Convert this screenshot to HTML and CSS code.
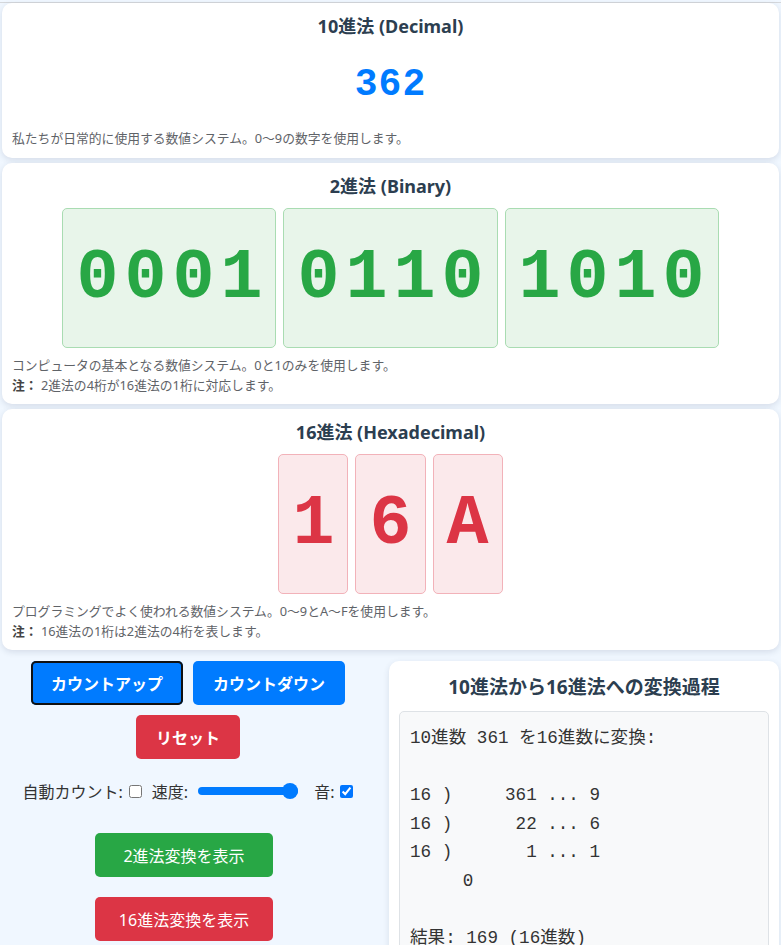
FILE: index.html
```
<!DOCTYPE html>
<html lang="ja">
<head>
<meta charset="utf-8">
<title>進数カウンター</title>
<link rel="stylesheet" href="styles.css">
</head>
<body>
<div class="topline"></div>
<main class="page">
  <section class="card card-dec">
    <h2 class="card-title">10進法 (Decimal)</h2>
    <div class="dec-value">362</div>
    <p class="desc desc-first">私たちが日常的に使用する数値システム。0〜9の数字を使用します。</p>
  </section>

  <section class="card">
    <h2 class="card-title">2進法 (Binary)</h2>
    <div class="digit-row">
      <div class="digit-box bin">0001</div>
      <div class="digit-box bin">0110</div>
      <div class="digit-box bin">1010</div>
    </div>
    <p class="desc">コンピュータの基本となる数値システム。0と1のみを使用します。</p>
    <p class="desc"><b>注：</b> 2進法の4桁が16進法の1桁に対応します。</p>
  </section>

  <section class="card">
    <h2 class="card-title">16進法 (Hexadecimal)</h2>
    <div class="digit-row">
      <div class="digit-box hex">1</div>
      <div class="digit-box hex">6</div>
      <div class="digit-box hex">A</div>
    </div>
    <p class="desc">プログラミングでよく使われる数値システム。0〜9とA〜Fを使用します。</p>
    <p class="desc"><b>注：</b> 16進法の1桁は2進法の4桁を表します。</p>
  </section>

  <div class="bottom">
    <div class="controls">
      <div class="btn-row">
        <button class="btn btn-blue is-focused">カウントアップ</button>
        <button class="btn btn-blue">カウントダウン</button>
        <button class="btn btn-red">リセット</button>
      </div>
      <div class="options">
        <label class="opt">自動カウント: <input type="checkbox"></label>
        <label class="opt">速度: <input type="range" class="speed" min="0" max="100" value="100"></label>
        <label class="opt">音: <input type="checkbox" checked></label>
      </div>
      <div class="show-btns">
        <button class="btn btn-wide btn-green">2進法変換を表示</button>
        <button class="btn btn-wide btn-red">16進法変換を表示</button>
      </div>
    </div>
    <section class="panel">
      <h3 class="panel-title">10進法から16進法への変換過程</h3>
<pre class="steps">10進数 361 を16進数に変換:

16 )     361 ... 9
16 )      22 ... 6
16 )       1 ... 1
     0

結果: 169 (16進数)</pre>
    </section>
  </div>
</main>
</body>
</html>
```
FILE: styles.css
```
* { box-sizing: border-box; }

html, body {
  margin: 0;
  padding: 0;
}

body {
  background: #f0f7ff;
  font-family: "Noto Sans", "Noto Sans CJK JP", sans-serif;
  color: #333;
  width: 781px;
  height: 945px;
  overflow: hidden;
}

.topline {
  margin-top: 2px;
  height: 1px;
  background: #d4d7db;
}

.page {
  padding: 0 2px;
}

.card {
  background: #fff;
  border-radius: 10px;
  box-shadow: 0 2px 6px rgba(40, 60, 90, 0.14);
  padding: 10px 10px 9px;
  margin-bottom: 5px;
}

.card-dec {
  padding-bottom: 10px;
}

.card-title {
  margin: 0;
  font-size: 18px;
  line-height: 26px;
  font-weight: 700;
  color: #2c3e50;
  text-align: center;
}

.dec-value {
  margin-top: 23px;
  text-align: center;
  font-family: "Liberation Mono", monospace;
  font-weight: 700;
  font-size: 38px;
  letter-spacing: 1px;
  line-height: 45px;
  color: #007bff;
}

.desc {
  margin: 0;
  font-family: "Noto Sans", "Noto Sans CJK JP", sans-serif;
  font-size: 12.8px;
  line-height: 20px;
  color: #5f6368;
}

.desc b { color: #444; }

.desc-first { margin-top: 21px; }

.digit-row {
  display: flex;
  justify-content: center;
  gap: 7px;
  margin: 9px 0 7px;
}

.digit-box {
  height: 140px;
  border-radius: 5px;
  display: flex;
  align-items: center;
  justify-content: center;
  font-family: "Liberation Mono", monospace;
  font-weight: 700;
  font-size: 70px;
  line-height: normal;
}

.bin {
  padding: 0 7px 0 13px;
  letter-spacing: 6px;
  background: #e8f5ea;
  border: 1px solid #a9dcb2;
  color: #28a745;
}

.hex {
  padding: 0 13px;
  background: #fbe9eb;
  border: 1px solid #f2b2b9;
  color: #dc3545;
}

.bottom {
  display: grid;
  grid-template-columns: 376px 1fr;
  column-gap: 13px;
  margin-top: 11px;
  margin-left: -2px;
}

.controls {
  display: flex;
  flex-direction: column;
  align-items: center;
}

.btn-row {
  display: flex;
  flex-wrap: wrap;
  justify-content: center;
  gap: 10px;
  width: 330px;
}

.btn {
  border: none;
  border-radius: 5px;
  height: 44px;
  padding: 0 20px;
  font-family: "Noto Sans", "Noto Sans CJK JP", sans-serif;
  font-size: 16px;
  font-weight: 700;
  color: #fff;
  cursor: pointer;
}

.btn-blue { background: #007bff; width: 152px; }
.btn-red { background: #dc3545; }
.btn-green { background: #28a745; }

.is-focused {
  box-shadow: inset 0 0 0 2px #111;
}

.options {
  display: flex;
  align-items: center;
  gap: 10px;
  margin-top: 20px;
  font-size: 16px;
  color: #333;
}

.opt {
  display: flex;
  align-items: center;
  gap: 4px;
}

.opt input[type="checkbox"] {
  margin: 0 0 0 2px;
  width: 13px;
  height: 13px;
  accent-color: #0075ff;
}

.speed {
  -webkit-appearance: none;
  appearance: none;
  width: 100px;
  height: 8px;
  margin: 0 6px;
  border-radius: 4px;
  background: #007bff;
}

.speed::-webkit-slider-thumb {
  -webkit-appearance: none;
  appearance: none;
  width: 16px;
  height: 16px;
  border-radius: 50%;
  background: #007bff;
}

.show-btns {
  display: flex;
  flex-direction: column;
  align-items: center;
  gap: 20px;
  margin-top: 30px;
  padding-right: 8px;
}

.btn-wide {
  width: 178px;
  font-weight: 400;
  padding: 0;
}

.panel {
  background: #fff;
  border-radius: 10px;
  box-shadow: 0 2px 6px rgba(40, 60, 90, 0.12);
  padding: 10px;
  height: 300px;
}

.panel-title {
  margin: 0 0 8px;
  font-size: 19px;
  line-height: 32px;
  font-weight: 700;
  color: #2c3e50;
  text-align: center;
}

.steps {
  margin: 0;
  background: #f8f9fa;
  border: 1px solid #dee2e6;
  border-radius: 5px;
  padding: 12px 10px 10px;
  font-family: "Liberation Mono", "Noto Sans CJK JP", monospace;
  font-size: 17.6px;
  line-height: 28.6px;
  color: #333;
  height: 260px;
}
```
